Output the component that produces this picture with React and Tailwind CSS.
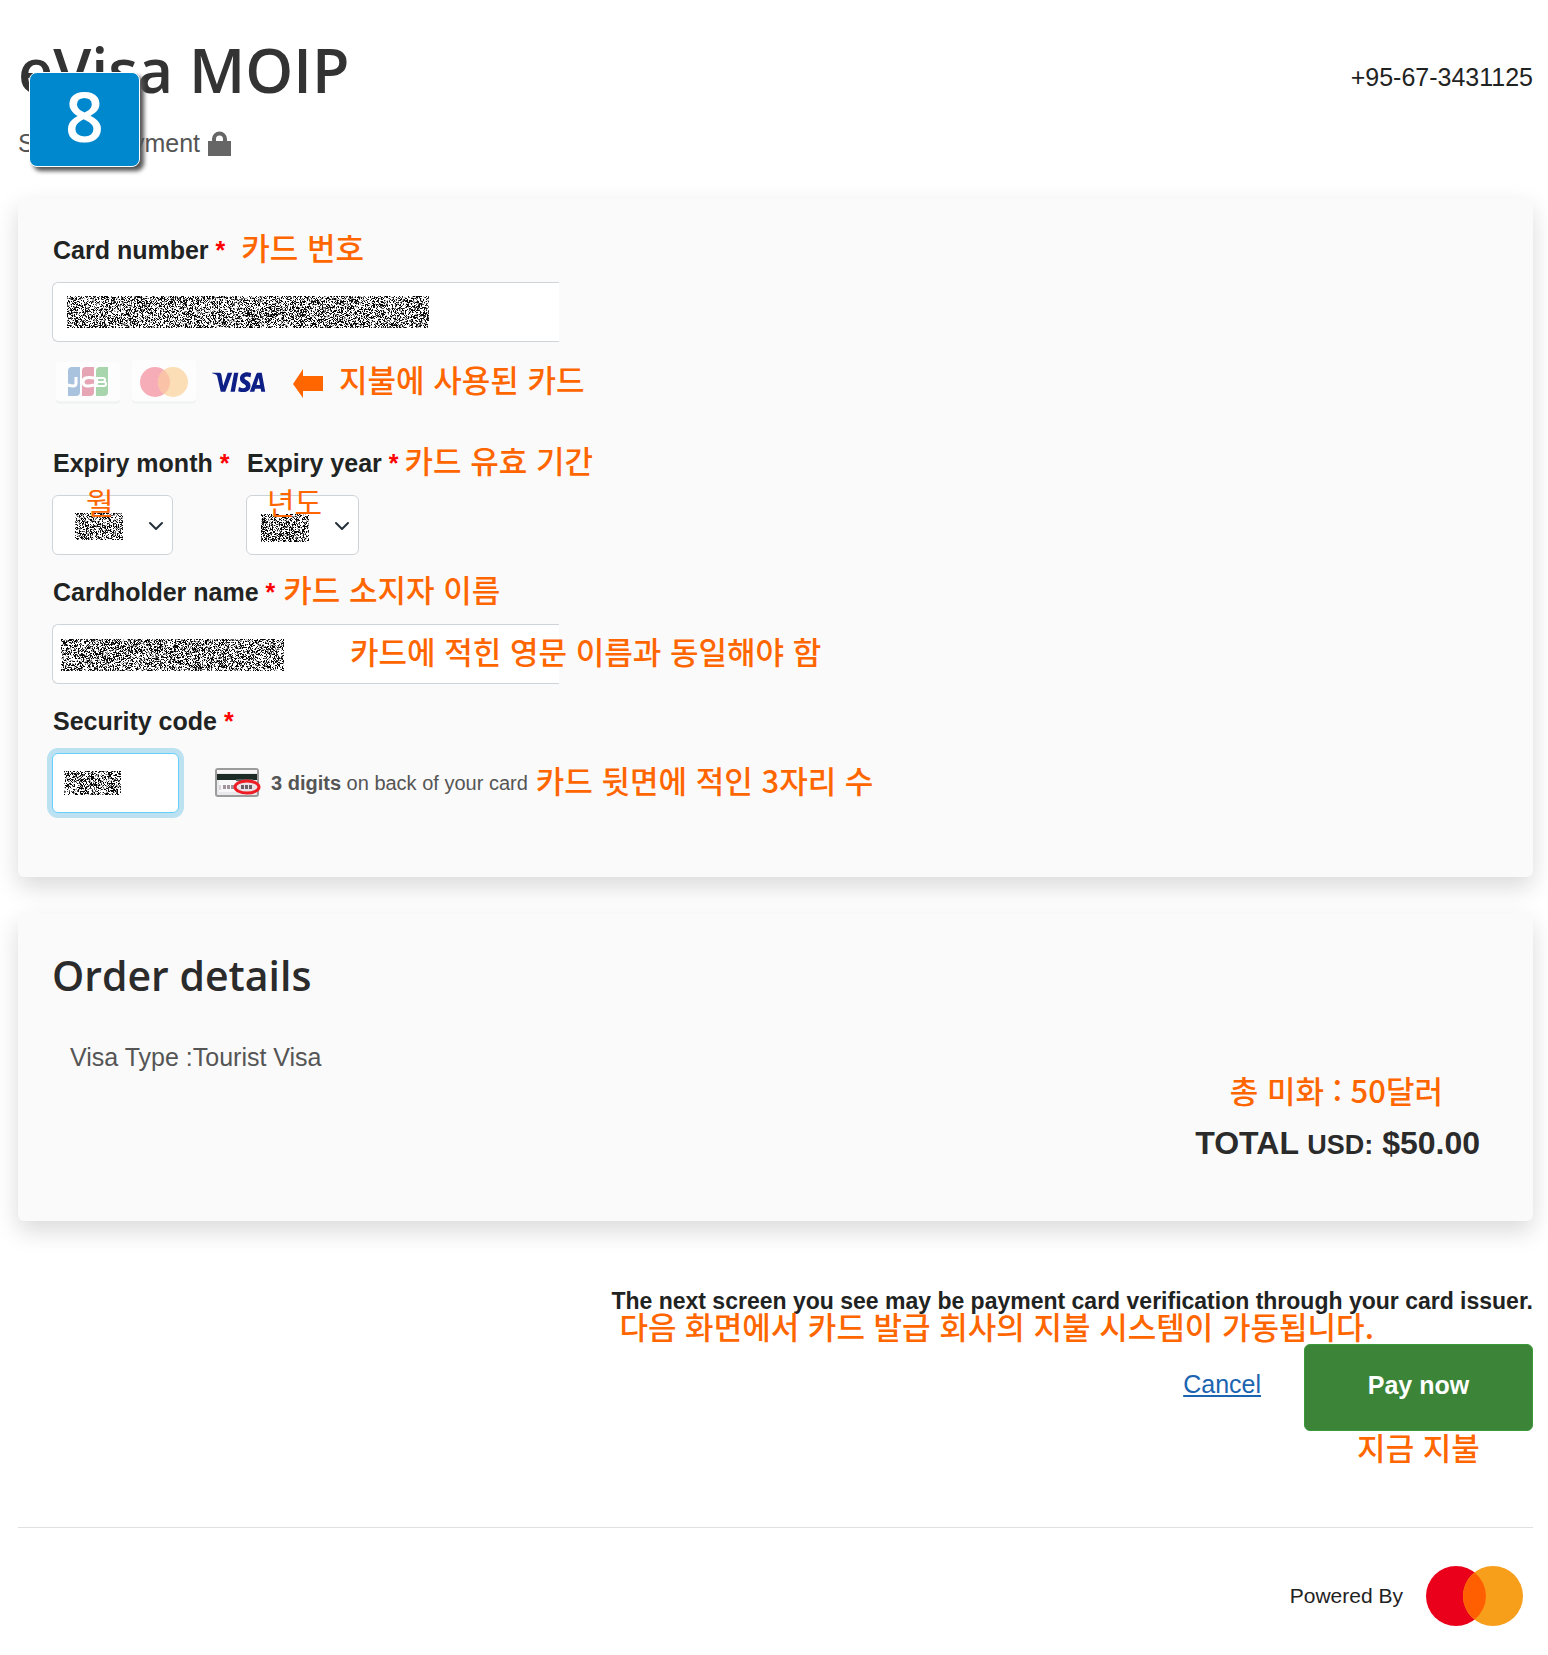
import React from 'react';
import { ChevronDown } from 'lucide-react';

// Speckled block that hides a value typed by the customer
const Redacted = ({ width, height, seed, className }) => {
  const shades = ['', '', ''];
  let state = seed;
  for (let y = 0; y < height; y++) {
    for (let x = 0; x < width; x++) {
      state = (state * 16807) % 2147483647;
      const value = state / 2147483647;
      const shade = value < 0.32 ? 0 : value < 0.42 ? 1 : value < 0.54 ? 2 : -1;
      if (shade >= 0) shades[shade] += `M${x} ${y}h1v1h-1z`;
    }
  }
  return (
    <svg
      width={width}
      height={height}
      shapeRendering="crispEdges"
      aria-hidden="true"
      className={`absolute pointer-events-none ${className}`}
    >
      <rect width={width} height={height} fill="#fff" />
      <path d={shades[0]} fill="#080808" />
      <path d={shades[1]} fill="#555" />
      <path d={shades[2]} fill="#aaa" />
    </svg>
  );
};

const Note = ({ children, className = '' }) => (
  <span
    lang="ko"
    className={`block pb-[6px] font-['Noto_Sans_CJK_KR',sans-serif] font-medium text-[31px] leading-[24px] text-[#ff6600] whitespace-nowrap ${className}`}
  >
    {children}
  </span>
);

const FieldLabel = ({ htmlFor, children }) => (
  <label htmlFor={htmlFor} className="block pl-px text-[25px] leading-[30px] font-bold text-[#1f2322] whitespace-nowrap">
    {children} <span className="text-[#ff0000]">*</span>
  </label>
);

const ExpirySelect = ({ id }) => (
  <select id={id} className="block w-full h-[60px] bg-white border border-[#cfd4d9] rounded-md appearance-none">
    <option value=""></option>
  </select>
);

const JcbLogo = () => (
  <svg width="68" height="44" viewBox="0 0 68 44" role="img" aria-label="JCB">
    <rect x="2" y="5" width="64" height="39" rx="4" fill="#f2f3f3" />
    <rect x="2" y="2" width="64" height="39" rx="4" fill="#fdfdfd" />
    <path d="M18 7h8v25q0 4-4 4h-8V11q0-4 4-4z" fill="#a9c2de" />
    <path d="M32 7h8v25q0 4-4 4h-8V11q0-4 4-4z" fill="#e6a5b4" />
    <path d="M46 7h8v25q0 4-4 4h-8V11q0-4 4-4z" fill="#a8d5ab" />
    <path d="M22 17v6q0 3-3 3-2 0-5-1" fill="none" stroke="#fff" strokeWidth="3" />
    <path d="M40 18q-11-2-11 4t11 3" fill="none" stroke="#fff" strokeWidth="3" />
    <path d="M43 18h6q2 0 2 2t-2 2h-6zM43 22h7q2 0 2 2t-2 2h-7z" fill="none" stroke="#fff" strokeWidth="2" />
  </svg>
);

const MastercardFaded = () => (
  <svg width="68" height="44" viewBox="0 0 68 44" role="img" aria-label="Mastercard">
    <rect x="2" y="4" width="64" height="40" rx="4" fill="#f3f4f4" />
    <rect x="2" y="0" width="64" height="41" rx="4" fill="#fdfdfd" />
    <circle cx="25" cy="22" r="15" fill="#f7adb7" />
    <circle cx="43" cy="22" r="15" fill="#fbdeb5" />
    <path d="M34 10a15 15 0 0 1 0 24a15 15 0 0 1 0-24z" fill="#fac2a6" />
  </svg>
);

const VisaLogo = () => (
  <svg width="54" height="20" viewBox="0 0 1000 324" role="img" aria-label="Visa" preserveAspectRatio="none">
    <path
      fill="#0e1f86"
      d="M651 6c-71 0-134 37-134 104 0 78 112 83 112 122 0 16-19 31-51 31-45 0-79-20-79-20l-14 67s39 17 91 17c76 0 137-38 137-106 0-81-113-86-113-122 0-13 15-27 47-27 36 0 65 15 65 15l14-65S694 6 651 6zM2 11 0 21s30 5 57 16c34 12 37 20 43 42l62 241h84L375 11h-84l-83 211-34-178c-3-21-19-33-39-33zm407 0-66 309h80l65-309zm445 0c-19 0-29 10-37 28L700 320h84l16-47h102l10 47h74L921 11zm11 84 25 116h-67z"
    />
  </svg>
);

const CardBackIcon = () => (
  <svg width="46" height="30" viewBox="0 0 46 30" className="shrink-0" aria-hidden="true">
    <rect x="1" y="1" width="42" height="27" rx="2" fill="#e9e9ec" stroke="#9b9b9b" strokeWidth="2" />
    <rect x="2" y="2" width="40" height="3" fill="#f7f7f7" />
    <rect x="2" y="6" width="40" height="6" fill="#1c2b26" />
    <rect x="4" y="12" width="17" height="12" fill="#f8f8f8" />
    <path d="M5 17v5" stroke="#b9b0b3" strokeWidth="1" />
    <path d="M8 19h12" stroke="#a2939a" strokeWidth="4" strokeDasharray="3 1" />
    <path d="M21 12h17" stroke="#55615d" strokeWidth="2" />
    <ellipse cx="32" cy="19" rx="12" ry="6" fill="#e9e2e6" stroke="#ee1c25" strokeWidth="3" />
    <path d="M26 19h12" stroke="#6a5f66" strokeWidth="4" strokeDasharray="3 1" />
  </svg>
);

const panel = 'bg-[#fafafa] rounded-md shadow-[0_10px_25px_rgba(0,0,0,0.15)] pl-[34px]';

const App = () => {
  return (
    <div className="min-h-screen bg-white pl-[18px] pr-[15px] pt-7 pb-5 font-['Liberation_Sans',Arial,sans-serif] text-[#1f2322]">
      {/* Header */}
      <header className="relative flex items-start justify-between">
        <div>
          <h1 className="font-['Open_Sans',sans-serif] font-semibold text-[61px] leading-[84px] text-[#333]">eVisa MOIP</h1>
          <p className="flex items-center mt-4 text-[25px] leading-[30px] text-[#555]">
            Secure payment
            <svg width="23" height="25" viewBox="0 0 23 25" className="ml-2" aria-hidden="true">
              <path
                fill="#666"
                d="M0 10h4V8a7.500 7.500 0 0 1 15 0v2h4v15H0zM8 10h7V8a3.500 3.500 0 0 0-7 0z"
              />
            </svg>
          </p>
        </div>
        <p className="mt-[34px] text-[25px] leading-[30px]">+95-67-3431125</p>
        <div className="absolute left-[11px] top-11 flex items-center justify-center w-[111px] h-[95px] rounded-lg border border-white bg-[#0088cf] shadow-[4px_4px_4px_#555] font-['Open_Sans',sans-serif] font-semibold text-[68px] leading-none text-white">
          <span className="pb-2">8</span>
        </div>
      </header>

      <form onSubmit={(e) => e.preventDefault()}>
        {/* Card form */}
        <section className={`mt-10 pt-[37px] pb-16 ${panel}`}>
          <div className="flex items-center">
            <FieldLabel htmlFor="card-number">Card number</FieldLabel>
            <Note className="ml-4">카드 번호</Note>
          </div>
          <div className="relative max-w-[507px] mt-[17px]">
            <input
              id="card-number"
              type="text"
              className="block w-full h-[60px] px-4 text-[25px] bg-white border border-r-0 border-[#cfd4d9] rounded-l-md outline-none"
            />
            <Redacted width={362} height={32} seed={7919} className="left-[15px] top-[14px]" />
          </div>
          <div className="flex items-center mt-[18px] pl-[2px]">
            <JcbLogo />
            <span className="ml-2">
              <MastercardFaded />
            </span>
            <span className="ml-[14px]">
              <VisaLogo />
            </span>
            <svg width="30" height="32" viewBox="0 0 30 32" className="ml-[27px]" aria-hidden="true">
              <path d="M0 18 10 3v7h20v15H10v7z" fill="#ff6600" />
            </svg>
            <Note className="ml-4">지불에 사용된 카드</Note>
          </div>

          <div className="flex mt-11">
            <div className="w-[194px]">
              <FieldLabel htmlFor="expiry-month">Expiry month</FieldLabel>
              <div className="relative w-[121px] mt-[17px]">
                <ExpirySelect id="expiry-month" />
                <Redacted width={48} height={27} seed={2111} className="left-[23px] top-[18px]" />
                <ChevronDown size={24} strokeWidth={2} className="absolute right-[5px] top-[19px] text-[#24303a] pointer-events-none" />
                <span lang="ko" className="absolute left-[34px] -top-2 font-['Noto_Sans_CJK_KR',sans-serif] text-[30px] leading-[28px] text-[#ff6600]">월</span>
              </div>
            </div>
            <div>
              <div className="flex items-center">
                <FieldLabel htmlFor="expiry-year">Expiry year</FieldLabel>
                <Note className="ml-[6px]">카드 유효 기간</Note>
              </div>
              <div className="relative w-[113px] mt-[17px]">
                <ExpirySelect id="expiry-year" />
                <Redacted width={48} height={28} seed={3557} className="left-[15px] top-[19px]" />
                <ChevronDown size={24} strokeWidth={2} className="absolute right-[5px] top-[19px] text-[#24303a] pointer-events-none" />
                <span lang="ko" className="absolute left-[21px] -top-2 font-['Noto_Sans_CJK_KR',sans-serif] text-[30px] leading-[28px] text-[#ff6600] whitespace-nowrap">년도</span>
              </div>
            </div>
          </div>

          <div className="flex items-center mt-[22px]">
            <FieldLabel htmlFor="cardholder">Cardholder name</FieldLabel>
            <Note className="ml-2">카드 소지자 이름</Note>
          </div>
          <div className="relative max-w-[507px] mt-[17px]">
            <input
              id="cardholder"
              type="text"
              className="block w-full h-[60px] px-4 text-[25px] bg-white border border-r-0 border-[#cfd4d9] rounded-l-md outline-none"
            />
            <Redacted width={223} height={32} seed={4973} className="left-[9px] top-[15px]" />
            <Note className="absolute left-[298px] top-[15px]">카드에 적힌 영문 이름과 동일해야 함</Note>
          </div>

          <div className="flex items-center mt-[22px]">
            <FieldLabel htmlFor="security-code">Security code</FieldLabel>
          </div>
          <div className="flex items-center mt-[17px]">
            <div className="relative w-[127px]">
              <input
                id="security-code"
                type="text"
                className="block w-full h-[60px] px-3 text-[25px] bg-white border border-[#66cfff] rounded-md outline-none ring-[5px] ring-[#bce2f1]"
              />
              <Redacted width={57} height={24} seed={6337} className="left-[12px] top-[18px]" />
            </div>
            <div className="flex items-center ml-9">
              <CardBackIcon />
              <p className="ml-[10px] text-[20px] leading-[30px] text-[#555]">
                <strong>3 digits</strong> on back of your card
              </p>
              <Note className="ml-2">카드 뒷면에 적인 3자리 수</Note>
            </div>
          </div>
        </section>

        {/* Order details */}
        <section className={`mt-9 pt-[35px] pb-14 pr-[53px] ${panel}`}>
          <h2 className="font-['Open_Sans',sans-serif] font-semibold text-[41px] leading-[55px] text-[#2b2b2b]">Order details</h2>
          <p className="mt-[39px] ml-[18px] text-[25px] leading-[30px] text-[#555]">Visa Type :Tourist Visa</p>
          <div className="flex flex-col items-end mt-[6px]">
            <Note className="mr-[37px]">총 미화 : 50달러</Note>
            <p className="mt-[15px] text-[32px] leading-[40px] font-bold text-[#2b2b2b]">
              TOTAL <span className="text-[27px]">USD:</span> $50.00
            </p>
          </div>
        </section>

        {/* Actions */}
        <div className="flex flex-col items-end mt-[67px]">
          <div className="flex flex-col">
            <strong className="text-[23px] leading-[26px]">
              The next screen you see may be payment card verification through your card issuer.
            </strong>
            <Note className="pl-2">다음 화면에서 카드 발급 회사의 지불 시스템이 가동됩니다.</Note>
          </div>
          <div className="flex items-center gap-[43px]">
            <a href="#cancel" className="pb-2 text-[25px] leading-[30px] text-[#1a64b0] underline">Cancel</a>
            <button
              type="submit"
              className="w-[229px] h-[87px] pb-1 rounded-md border border-[#3a9a3a] bg-[#3b8438] text-[25px] font-bold text-white"
            >
              Pay now
            </button>
          </div>
          <Note className="w-[229px] mt-1 text-center">지금 지불</Note>
        </div>
      </form>

      {/* Footer */}
      <footer className="flex items-center justify-end mt-[62px] pt-[38px] pr-[10px] border-t border-[#e0e0e0]">
        <span className="text-[21px] leading-[30px]">Powered By</span>
        <svg width="98" height="60" viewBox="0 0 98 60" className="ml-[22px]" role="img" aria-label="Mastercard">
          <circle cx="31" cy="30" r="30" fill="#eb001b" />
          <circle cx="68" cy="30" r="30" fill="#f79e1b" />
          <path d="M49.500 6.400a30 30 0 0 1 0 47.200a30 30 0 0 1 0-47.200z" fill="#ff5f00" />
        </svg>
      </footer>
    </div>
  );
};

export default App;
